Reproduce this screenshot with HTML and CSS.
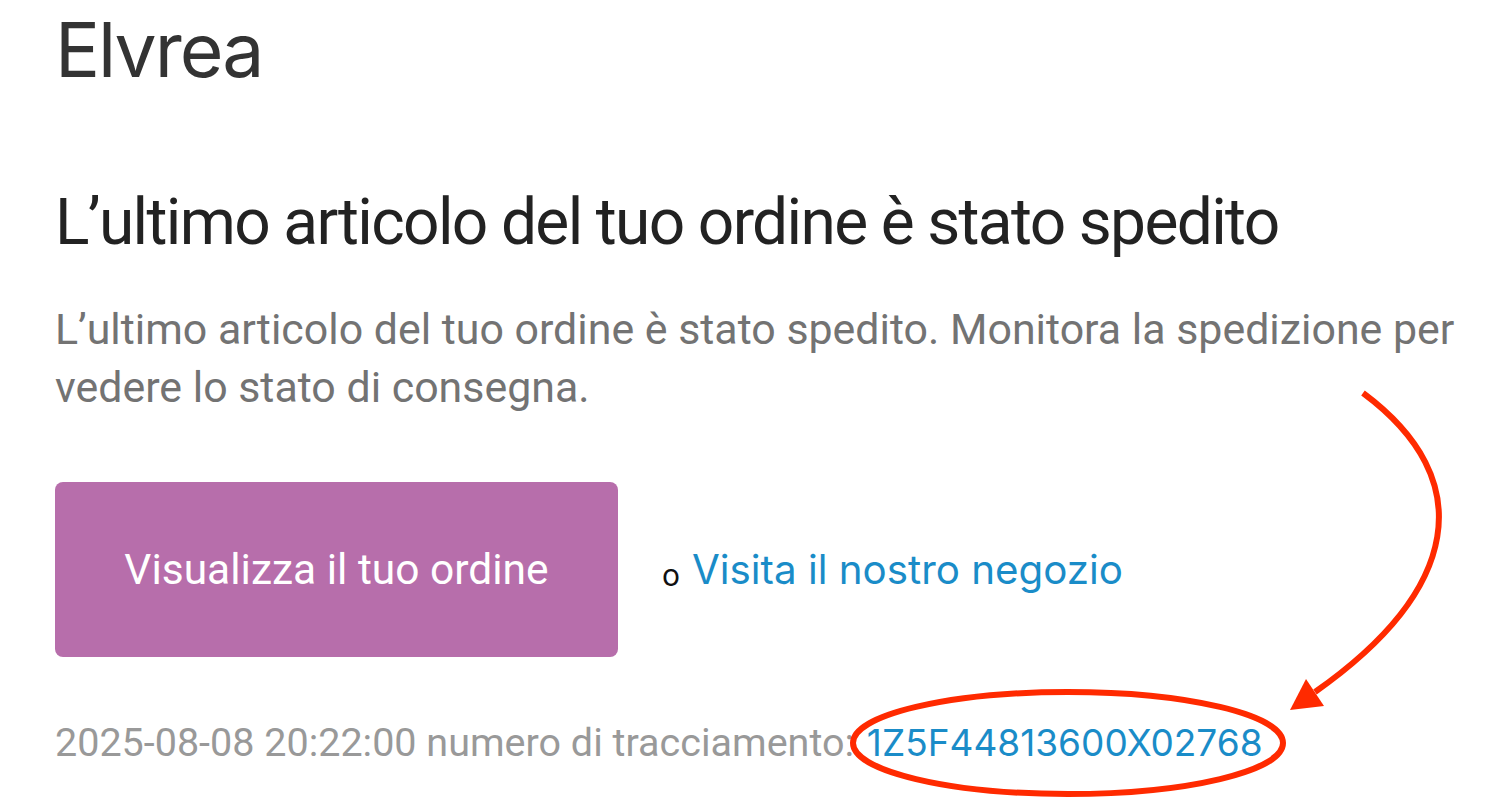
FILE: index.html
```html
<!DOCTYPE html>
<html lang="it">
<head>
    <meta charset="UTF-8">
    <title>Elvrea</title>
    <link rel="stylesheet" href="styles.css">
</head>
<body>
<div class="mail">
    <div class="mail_brand">Elvrea</div>

    <h1 class="mail_title">L’ultimo articolo del tuo ordine è stato spedito</h1>
    <p class="mail_text">L’ultimo articolo del tuo ordine è stato spedito. Monitora la spedizione per vedere lo stato di consegna.</p>

    <div class="mail_actions">
        <a class="mail_btn" href="#">Visualizza il tuo ordine</a>
        <span class="mail_or">o</span>
        <a class="mail_link" href="#">Visita il nostro negozio</a>
    </div>

    <div class="mail_track">
        <span class="mail_track_label">2025-08-08 20:22:00 numero di tracciamento:</span>
        <a class="mail_track_num" href="#">1Z5F44813600X02768</a>
    </div>
</div>

<!-- annotazione -->
<svg class="mark" width="1500" height="809" viewBox="0 0 1500 809">
    <ellipse cx="1068" cy="743" rx="215" ry="51" fill="none" stroke="#ff2a00" stroke-width="6"/>
    <path d="M1363 393 C1480 480 1460 590 1315 692" fill="none" stroke="#ff2a00" stroke-width="6"/>
    <polygon points="1290,710 1306,679 1324,706" fill="#ff2a00"/>
</svg>
</body>
</html>
```

FILE: styles.css
```css
body {
    margin: 0;
    background: #fff;
    font-family: Roboto, "Liberation Sans", sans-serif;
}

.mail {
    padding: 0 0 0 55px;
}

.mail_brand {
    font-family: Inter, "Liberation Sans", sans-serif;
    font-size: 75px;
    line-height: 100px;
    color: #333;
    letter-spacing: -2px;
}

.mail_title {
    margin: 78px 0 0;
    font-size: 64px;
    font-weight: 400;
    line-height: 90px;
    letter-spacing: -1.65px;
    color: #222;
}

.mail_text {
    max-width: 1430px;
    margin: 32px 0 0;
    font-size: 42.9px;
    line-height: 58px;
    color: #737373;
}

.mail_actions {
    display: flex;
    align-items: center;
    margin-top: 66px;
}

.mail_btn {
    display: flex;
    align-items: center;
    justify-content: center;
    width: 563px;
    height: 175px;
    border-radius: 8px;
    background: #b76eab;
    color: #fff;
    font-size: 42.5px;
    text-decoration: none;
}

.mail_or {
    margin-left: 44px;
    font-family: Inter, "Liberation Sans", sans-serif;
    font-size: 30px;
    color: #111;
    padding-top: 10px;
}

.mail_link {
    margin-left: 12px;
    font-family: Inter, "Liberation Sans", sans-serif;
    font-size: 40.3px;
    color: #1a8cc8;
    text-decoration: none;
}

.mail_track {
    margin-top: 62px;
    font-size: 39.5px;
    color: #999;
}

.mail_track_num {
    margin-left: 3px;
    font-family: Inter, "Liberation Sans", sans-serif;
    font-size: 37px;
    color: #1a8cc8;
    text-decoration: none;
}

.mark {
    position: absolute;
    left: 0;
    top: 0;
    pointer-events: none;
}
```
